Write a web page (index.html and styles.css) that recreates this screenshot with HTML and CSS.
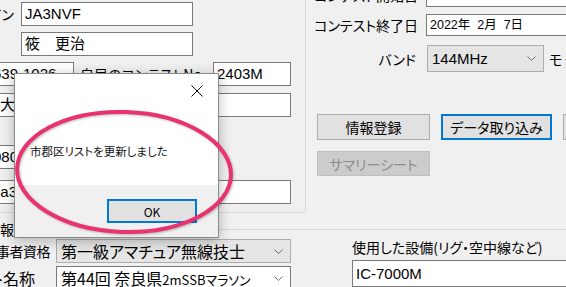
FILE: index.html
```html
<!DOCTYPE html>
<html lang="ja">
<head>
    <meta charset="UTF-8">
    <meta name="viewport" content="width=device-width, initial-scale=1.0">
    <title>コンテスト設定</title>
    <link rel="stylesheet" href="styles.css">
</head>
<body>
<div class="app">
    <div class="upper">
        <!-- 自局情報 -->
        <section class="station">
            <div class="row first">
                <span class="lbl lbl-cs">コールサイン</span>
                <div class="field f-cs">JA3NVF</div>
            </div>
            <div class="row">
                <div class="field f-name">筱　更治</div>
            </div>
            <div class="row">
                <div class="field f-zip">639-1026</div>
                <span class="lbl lbl-no">自局のコンテストNo.</span>
                <div class="field f-side">2403M</div>
            </div>
            <div class="row r-addr">
                <div class="field f-wide">大和郡山市</div>
                <div class="field f-side"></div>
            </div>
            <div class="row r-tel">
                <div class="field f-wide f-tel">080-</div>
            </div>
            <div class="row r-mail">
                <div class="field f-wide f-mail">ja3nvf@</div>
                <div class="field f-side"></div>
            </div>
        </section>

        <!-- コンテスト情報 -->
        <section class="contest">
            <div class="c-row c-start">
                <span class="lbl lbl-date">コンテスト開始日</span>
                <div class="field f-date">2022年  2月  7日</div>
            </div>
            <div class="c-row c-end">
                <span class="lbl lbl-date">コンテスト終了日</span>
                <div class="field f-date">2022年  2月  7日</div>
            </div>
            <div class="c-row c-band">
                <span class="lbl lbl-band">バンド</span>
                <div class="combo f-band">
                    <span>144MHz</span>
                    <svg class="chev" width="9" height="5" viewBox="0 0 9 5"><polyline points="0.5,0.5 4.5,4.5 8.5,0.5" fill="none" stroke="#6d6d6d" stroke-width="1"/></svg>
                </div>
                <span class="lbl lbl-mode">モード</span>
            </div>
            <div class="c-row c-btns">
                <button class="btn b-info">情報登録</button>
                <button class="btn btn-default b-import">データ取り込み</button>
                <button class="btn b-close">閉じる</button>
            </div>
            <div class="c-row c-btns2">
                <button class="btn b-info" disabled>サマリーシート</button>
            </div>
        </section>
    </div>

    <!-- 参加局情報 -->
    <section class="entry">
        <div class="entry-head">
            <span class="lbl lbl-head">参加局情報</span>
            <span class="rule"></span>
        </div>
        <div class="entry-body">
            <div class="entry-left">
                <div class="e-row e-license">
                    <span class="lbl lbl-license">従事者資格</span>
                    <div class="combo f-license">
                        <span>第一級アマチュア無線技士</span>
                        <svg class="chev" width="9" height="5" viewBox="0 0 9 5"><polyline points="0.5,0.5 4.5,4.5 8.5,0.5" fill="none" stroke="#6d6d6d" stroke-width="1"/></svg>
                    </div>
                </div>
                <div class="e-row e-title">
                    <span class="lbl lbl-title">コンテスト名称</span>
                    <div class="combo combo-white f-title">
                        <span>第44回 奈良県<small>2mSSBマラソン</small></span>
                        <svg class="chev" width="9" height="5" viewBox="0 0 9 5"><polyline points="0.5,0.5 4.5,4.5 8.5,0.5" fill="none" stroke="#6d6d6d" stroke-width="1"/></svg>
                    </div>
                </div>
            </div>
            <div class="entry-right">
                <div class="lbl-rig">使用した設備(リグ・空中線など)</div>
                <div class="field f-rig">IC-7000M</div>
            </div>
        </div>
    </section>

    <!-- メッセージボックス -->
    <div class="msgbox">
        <div class="msg-head">
            <svg width="12" height="12" viewBox="0 0 12 12"><path d="M0.5 0.5 L11.5 11.5 M11.5 0.5 L0.5 11.5" stroke="#111" stroke-width="1"/></svg>
        </div>
        <div class="msg-body">市郡区リストを更新しました</div>
        <div class="msg-foot">
            <button class="ok-btn">OK</button>
        </div>
    </div>

    <svg class="mark" width="566" height="287" viewBox="0 0 566 287">
        <ellipse cx="124" cy="172" rx="107" ry="60" fill="none" stroke="#e8336f" stroke-width="4" transform="rotate(2 124 172)"/>
    </svg>
</div>
</body>
</html>
```

FILE: styles.css
```css
* {
    box-sizing: border-box;
}
body {
    margin: 0;
    width: 566px;
    height: 287px;
    overflow: hidden;
    background-color: #f0f0f0;
    font-family: "Noto Sans CJK JP", sans-serif;
    font-size: 14px;
    font-feature-settings: "palt";
    color: #000;
}
.app {
    position: relative;
    width: 566px;
    height: 287px;
}
.upper {
    display: flex;
    height: 213px;
}

/* common controls */
.lbl {
    display: flex;
    justify-content: flex-end;
    flex: none;
    white-space: nowrap;
    line-height: 18px;
}
.field {
    flex: none;
    height: 24px;
    line-height: 22px;
    padding-left: 3px;
    background: #fff;
    border: 1px solid #7a7a7a;
    font-family: "Liberation Sans", "Noto Sans CJK JP", sans-serif;
    font-size: 15px;
    white-space: pre;
    overflow: hidden;
}
.combo {
    flex: none;
    display: flex;
    align-items: center;
    justify-content: space-between;
    padding: 0 7px 0 4px;
    background: #e5e5e5;
    border: 1px solid #adadad;
    white-space: nowrap;
    overflow: hidden;
}
.combo-white {
    background: #fff;
    border-color: #7a7a7a;
}
.chev {
    flex: none;
}
.btn {
    flex: none;
    height: 26px;
    padding: 0;
    background: #e1e1e1;
    border: 1px solid #adadad;
    font-family: "Noto Sans CJK JP", sans-serif;
    font-size: 14px;
    font-feature-settings: "palt";
    color: #000;
}
.btn-default {
    border: 2px solid #0078d7;
}
.btn:disabled {
    background: #cccccc;
    border-color: #bfbfbf;
    color: #8d8d8d;
}

/* station group */
.station {
    flex: none;
    width: 306px;
    padding-top: 2px;
    border-right: 1px solid #d9d9d9;
    border-bottom: 1px solid #d9d9d9;
    border-bottom-right-radius: 3px;
}
.row {
    display: flex;
    align-items: center;
    height: 24px;
    margin-top: 6px;
}
.row.first {
    margin-top: 0;
}
.r-addr {
    margin-top: 7px;
}
.r-tel {
    margin-top: 28px;
}
.r-mail {
    margin-top: 11px;
}
.lbl-cs {
    width: 14px;
}
.f-cs {
    margin-left: 7px;
    width: 172px;
}
.f-name {
    margin-left: 21px;
    width: 172px;
}
.f-zip {
    margin-left: -11px;
    width: 85px;
}
.lbl-no {
    margin-left: 6px;
    width: 130px;
    justify-content: flex-start;
}
.f-side {
    margin-left: 3px;
    width: 78px;
}
.f-wide {
    margin-left: -4px;
    width: 209px;
}
.f-tel {
    margin-left: -11px;
    width: 216px;
}
.f-mail {
    margin-left: -7px;
    width: 212px;
}
.f-wide + .f-side {
    margin-left: 8px;
}

/* contest group */
.contest {
    flex: 1;
    min-width: 0;
}
.c-row {
    display: flex;
    align-items: center;
}
.c-start {
    margin-top: -17px;
    height: 24px;
}
.c-end {
    margin-top: 7px;
    height: 22px;
}
.lbl-date {
    width: 112px;
    font-size: 14px;
}
.f-date {
    margin-left: 8px;
    width: 150px;
    height: 100%;
    line-height: 20px;
    font-size: 12.5px;
}
.c-band {
    margin-top: 9px;
    height: 27px;
}
.lbl-band {
    width: 110px;
}
.f-band {
    margin-left: 11px;
    width: 117px;
    height: 27px;
    font-family: "Liberation Sans", sans-serif;
    font-size: 15px;
}
.lbl-mode {
    margin-left: 5px;
    letter-spacing: 2px;
}
.c-btns {
    margin-top: 42px;
    padding-left: 11px;
    gap: 11px;
}
.b-info {
    width: 113px;
}
.b-import {
    width: 111px;
}
.b-close {
    width: 60px;
}
.c-btns2 {
    margin-top: 11px;
    padding-left: 11px;
}
.c-btns2 .btn {
    height: 25px;
}

/* entry group */
.entry {
    margin-top: 7px;
}
.entry-head {
    display: flex;
    align-items: center;
    height: 18px;
}
.lbl-head {
    width: 14px;
}
.rule {
    flex: 1;
    margin-left: 3px;
    border-top: 1px solid #d9d9d9;
}
.entry-body {
    display: flex;
}
.entry-left {
    flex: none;
    width: 305px;
}
.e-row {
    display: flex;
    align-items: center;
}
.e-license {
    margin-top: 1px;
    height: 24px;
}
.e-title {
    margin-top: 3px;
    height: 24px;
}
.lbl-license {
    width: 50px;
    font-size: 14px;
    letter-spacing: -0.5px;
}
.lbl-title {
    width: 35px;
    font-size: 16px;
}
.f-license {
    margin-left: 6px;
    width: 235px;
    height: 24px;
    font-size: 16px;
}
.f-title {
    margin-left: 21px;
    width: 235px;
    height: 24px;
    font-size: 16px;
}
.f-title small {
    font-size: 13px;
}
.entry-right {
    flex: 1;
    padding-left: 47px;
}
.lbl-rig {
    height: 22px;
    line-height: 18px;
    white-space: nowrap;
}
.f-rig {
    width: 230px;
    height: 27px;
    line-height: 25px;
}

/* message box */
.msgbox {
    position: absolute;
    left: 14px;
    top: 73px;
    width: 205px;
    height: 165px;
    display: flex;
    flex-direction: column;
    background: #fff;
    border: 1px solid #8a8a8a;
    box-shadow: 0 3px 12px rgba(0, 0, 0, 0.28);
}
.msg-head {
    height: 36px;
    display: flex;
    justify-content: flex-end;
    padding: 11px 15px 0 0;
}
.msg-body {
    flex: 1;
    padding: 33px 0 0 15px;
    font-size: 11.5px;
    line-height: 16px;
    color: #111;
}
.msg-foot {
    height: 52px;
    display: flex;
    align-items: center;
    justify-content: flex-end;
    padding-right: 21px;
    background: #f0f0f0;
}
.ok-btn {
    width: 90px;
    height: 24px;
    padding: 0;
    background: #e1e1e1;
    border: 2px solid #0078d7;
    font-family: "Noto Sans CJK JP", sans-serif;
    font-size: 12px;
    color: #000;
}

/* annotation */
.mark {
    position: absolute;
    left: 0;
    top: 0;
    pointer-events: none;
    filter: drop-shadow(1px 1px 1px rgba(0, 0, 0, 0.25));
}
```
